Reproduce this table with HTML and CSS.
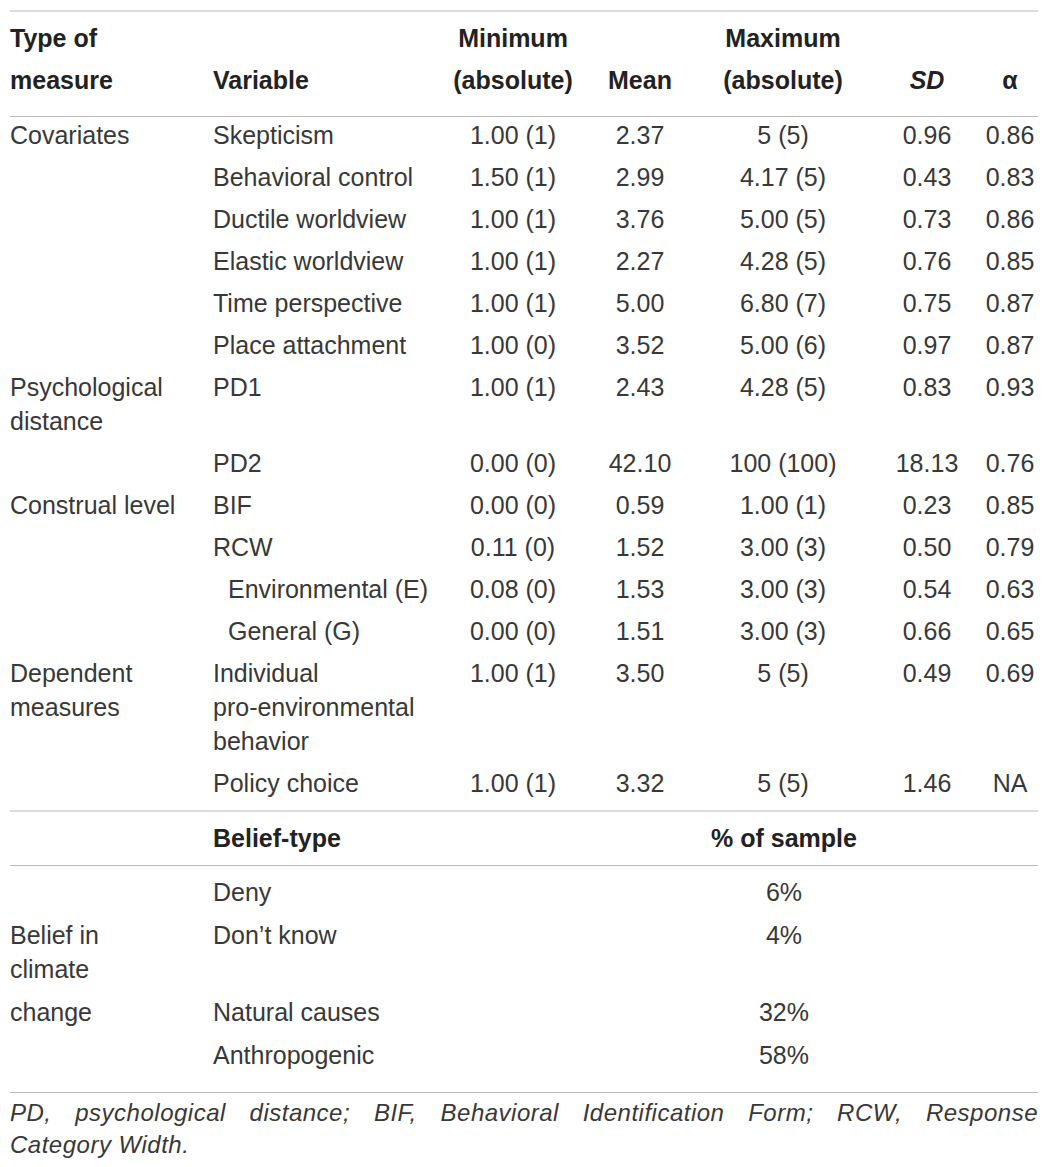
FILE: index.html
```html
<!DOCTYPE html>
<html lang="en">
<head>
<meta charset="utf-8">
<title>Descriptive statistics</title>
<link rel="stylesheet" href="styles.css">
</head>
<body>
<div class="page">
  <table class="stats">
    <colgroup>
      <col class="c-type">
      <col class="c-var">
      <col class="c-min">
      <col class="c-mean">
      <col class="c-max">
      <col class="c-sd">
      <col class="c-alpha">
    </colgroup>
    <thead>
      <tr>
        <th class="first left">Type of<br>measure</th>
        <th class="left">Variable</th>
        <th>Minimum<br>(absolute)</th>
        <th>Mean</th>
        <th>Maximum<br>(absolute)</th>
        <th><i>SD</i></th>
        <th class="alpha">α</th>
      </tr>
    </thead>
    <tbody class="main">
      <tr><td class="first">Covariates</td><td>Skepticism</td><td class="num">1.00 (1)</td><td class="num">2.37</td><td class="num">5 (5)</td><td class="num">0.96</td><td class="num">0.86</td></tr>
      <tr><td class="first"></td><td>Behavioral control</td><td class="num">1.50 (1)</td><td class="num">2.99</td><td class="num">4.17 (5)</td><td class="num">0.43</td><td class="num">0.83</td></tr>
      <tr><td class="first"></td><td>Ductile worldview</td><td class="num">1.00 (1)</td><td class="num">3.76</td><td class="num">5.00 (5)</td><td class="num">0.73</td><td class="num">0.86</td></tr>
      <tr><td class="first"></td><td>Elastic worldview</td><td class="num">1.00 (1)</td><td class="num">2.27</td><td class="num">4.28 (5)</td><td class="num">0.76</td><td class="num">0.85</td></tr>
      <tr><td class="first"></td><td>Time perspective</td><td class="num">1.00 (1)</td><td class="num">5.00</td><td class="num">6.80 (7)</td><td class="num">0.75</td><td class="num">0.87</td></tr>
      <tr><td class="first"></td><td>Place attachment</td><td class="num">1.00 (0)</td><td class="num">3.52</td><td class="num">5.00 (6)</td><td class="num">0.97</td><td class="num">0.87</td></tr>
      <tr><td class="first">Psychological<br>distance</td><td>PD1</td><td class="num">1.00 (1)</td><td class="num">2.43</td><td class="num">4.28 (5)</td><td class="num">0.83</td><td class="num">0.93</td></tr>
      <tr><td class="first"></td><td>PD2</td><td class="num">0.00 (0)</td><td class="num">42.10</td><td class="num">100 (100)</td><td class="num">18.13</td><td class="num">0.76</td></tr>
      <tr><td class="first">Construal level</td><td>BIF</td><td class="num">0.00 (0)</td><td class="num">0.59</td><td class="num">1.00 (1)</td><td class="num">0.23</td><td class="num">0.85</td></tr>
      <tr><td class="first"></td><td>RCW</td><td class="num">0.11 (0)</td><td class="num">1.52</td><td class="num">3.00 (3)</td><td class="num">0.50</td><td class="num">0.79</td></tr>
      <tr><td class="first"></td><td class="sub">Environmental (E)</td><td class="num">0.08 (0)</td><td class="num">1.53</td><td class="num">3.00 (3)</td><td class="num">0.54</td><td class="num">0.63</td></tr>
      <tr><td class="first"></td><td class="sub">General (G)</td><td class="num">0.00 (0)</td><td class="num">1.51</td><td class="num">3.00 (3)</td><td class="num">0.66</td><td class="num">0.65</td></tr>
      <tr><td class="first">Dependent<br>measures</td><td>Individual<br>pro-environmental<br>behavior</td><td class="num">1.00 (1)</td><td class="num">3.50</td><td class="num">5 (5)</td><td class="num">0.49</td><td class="num">0.69</td></tr>
      <tr class="last"><td class="first"></td><td>Policy choice</td><td class="num">1.00 (1)</td><td class="num">3.32</td><td class="num">5 (5)</td><td class="num">1.46</td><td class="num">NA</td></tr>
    </tbody>
    <tbody class="belief">
      <tr class="bhead">
        <td class="first"></td>
        <th class="left">Belief-type</th>
        <td></td>
        <th colspan="3">% of sample</th>
        <td></td>
      </tr>
      <tr><td class="first"></td><td>Deny</td><td></td><td class="num" colspan="3">6%</td><td></td></tr>
      <tr><td class="first">Belief in<br>climate</td><td>Don’t know</td><td></td><td class="num" colspan="3">4%</td><td></td></tr>
      <tr><td class="first">change</td><td>Natural causes</td><td></td><td class="num" colspan="3">32%</td><td></td></tr>
      <tr class="b-last"><td class="first"></td><td>Anthropogenic</td><td></td><td class="num" colspan="3">58%</td><td></td></tr>
    </tbody>
  </table>
  <p class="note"><span class="note-line">PD, psychological distance; BIF, Behavioral Identification Form; RCW, Response</span> Category Width.</p>
</div>
</body>
</html>
```

FILE: styles.css
```css
html, body {
  margin: 0;
  padding: 0;
  background: #ffffff;
}

body {
  font-family: "Liberation Sans", Arial, Helvetica, sans-serif;
  color: #383838;
}

.page {
  width: 1028px;
  margin: 10px 0 0 10px;
}

.stats {
  width: 1028px;
  table-layout: fixed;
  border-collapse: collapse;
  border-top: 2px solid #dcdcdc;
  border-bottom: 1px solid #b8b8b8;
  font-size: 25px;
}

.c-type { width: 193px; }
.c-var { width: 227px; }
.c-min { width: 166px; }
.c-mean { width: 88px; }
.c-max { width: 198px; }
.c-sd { width: 90px; }
.c-alpha { width: 66px; }

.stats th {
  font-weight: bold;
  color: #222222;
  text-align: center;
  vertical-align: bottom;
  line-height: 42px;
  padding: 5px 10px 15px;
  white-space: nowrap;
}

.stats th.left { text-align: left; }

.stats thead tr {
  border-bottom: 1px solid #b8b8b8;
}

.stats td {
  line-height: 34px;
  padding: 1px 10px 7px;
  vertical-align: top;
  text-align: left;
  white-space: nowrap;
}

.stats td.num { text-align: center; }

.stats .first { padding-left: 0; }

.stats th.alpha,
.stats td:last-child { padding-right: 0; }

.stats td.sub { padding-left: 25px; }

.stats tr.last td { padding-bottom: 10px; }

.stats tbody.main {
  border-bottom: 2px solid #dcdcdc;
}

.stats tr.bhead {
  border-bottom: 1px solid #b8b8b8;
}

.stats tr.bhead th {
  line-height: 34px;
  padding: 9px 10px 10px;
  vertical-align: top;
}

.stats tbody.belief td {
  padding-top: 9px;
  padding-bottom: 0;
}

.stats tbody.belief tr.b-last td {
  padding-bottom: 20px;
}

.note {
  margin: 4px 0 0;
  font-size: 24px;
  font-style: italic;
  letter-spacing: 0.5px;
  line-height: 32px;
  color: #383838;
}

.note-line {
  display: block;
  text-align: justify;
  text-align-last: justify;
}
```
